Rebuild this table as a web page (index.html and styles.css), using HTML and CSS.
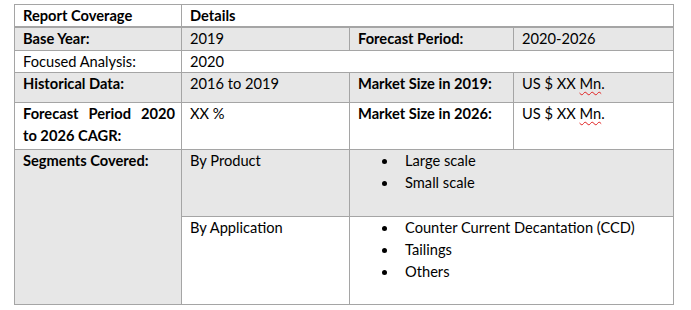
FILE: index.html
```html
<!DOCTYPE html>
<html lang="en">
<head>
<meta charset="utf-8">
<title>Report Coverage</title>
<link rel="stylesheet" href="styles.css">
</head>
<body>
<table class="report">
  <colgroup>
    <col class="c1"><col class="c2"><col class="c3"><col class="c4">
  </colgroup>
  <thead>
    <tr class="head">
      <th>Report Coverage</th>
      <th colspan="3">Details</th>
    </tr>
  </thead>
  <tbody>
    <tr class="shade r-base">
      <td class="label">Base Year:</td>
      <td>2019</td>
      <td class="label">Forecast Period:</td>
      <td>2020-2026</td>
    </tr>
    <tr class="r-focus">
      <td>Focused Analysis:</td>
      <td colspan="3">2020</td>
    </tr>
    <tr class="shade r-hist">
      <td class="label">Historical Data:</td>
      <td>2016 to 2019</td>
      <td class="label">Market Size in 2019:</td>
      <td>US $ XX <span class="spell">Mn</span>.</td>
    </tr>
    <tr class="r-cagr">
      <td class="label justify">Forecast Period 2020 to 2026 CAGR:</td>
      <td>XX %</td>
      <td class="label">Market Size in 2026:</td>
      <td>US $ XX <span class="spell">Mn</span>.</td>
    </tr>
    <tr class="shade r-prod">
      <td class="label" rowspan="2">Segments Covered:</td>
      <td>By Product</td>
      <td colspan="2">
        <ul class="bullets">
          <li>Large scale</li>
          <li>Small scale</li>
        </ul>
      </td>
    </tr>
    <tr class="r-app">
      <td>By Application</td>
      <td colspan="2">
        <ul class="bullets">
          <li>Counter Current Decantation (CCD)</li>
          <li>Tailings</li>
          <li>Others</li>
        </ul>
      </td>
    </tr>
  </tbody>
</table>
</body>
</html>
```
FILE: styles.css
```css
html, body {
  margin: 0;
  padding: 0;
  background: #ffffff;
}

body {
  font-family: "Lato", "Open Sans", "Liberation Sans", sans-serif;
  font-size: 14.67px;
  color: #000000;
}

.report {
  margin: 4px 0 0 14px;
  width: 659px;
  border-collapse: collapse;
  table-layout: fixed;
}

.c1 { width: 167px; }
.c2 { width: 168px; }
.c3 { width: 164px; }
.c4 { width: 160px; }

.report th,
.report td {
  border: 1px solid #a5a5a5;
  padding: 0 6px 0 8px;
  line-height: 22px;
  vertical-align: top;
  text-align: left;
}

.report th {
  font-weight: 700;
}

.head th {
  height: 21px;
  line-height: 21px;
  border-bottom: 2px solid #a5a5a5;
}

.shade td {
  background: #e7e7e7;
}

.label {
  font-weight: 700;
}

.report .justify {
  text-align: justify;
}

.r-base td { height: 22px; }
.r-focus td { height: 21px; line-height: 21px; }
.r-hist td { height: 29px; }
.r-cagr td { height: 46px; }
.r-prod td { height: 66px; }
.r-app td { height: 87px; }

.spell {
  text-decoration: underline wavy #e02020;
  text-decoration-thickness: 1px;
  text-underline-offset: 2px;
}

.bullets {
  list-style: none;
  margin: 0;
  padding: 0;
}

.bullets li {
  display: flex;
  align-items: center;
  height: 22px;
}

.bullets li::before {
  content: "";
  flex: none;
  width: 5px;
  height: 5px;
  border-radius: 50%;
  background: #000000;
  margin: 0 18px 0 24px;
}
```
